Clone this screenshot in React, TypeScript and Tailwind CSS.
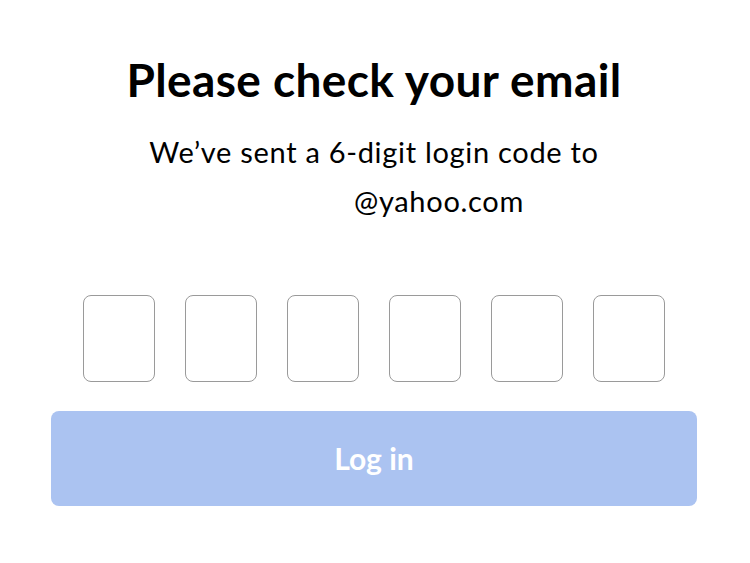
export default function App() {
  return (
    <div className="min-h-[563px] w-[750px] bg-white font-['Lato',sans-serif] text-black">
      <div className="ml-[51px] flex w-[646px] flex-col items-center pt-[52px]">
        <h1 className="text-[46px] font-bold leading-[56px] tracking-[0.4px]">Please check your email</h1>
        <p className="mt-[19px] text-center text-[29px] leading-[49px] tracking-[0.7px]">
          We’ve sent a 6-digit login code to
          <br />
          <span className="inline-block w-[130px]" />@yahoo.com
        </p>
        <div className="mt-[70px] flex gap-[30px]">
          {[0, 1, 2, 3, 4, 5].map((i) => (
            <input
              key={i}
              maxLength={1}
              className="h-[87px] w-[72px] rounded-[8px] border border-[#9a9a9a] text-center text-[32px] outline-none"
            />
          ))}
        </div>
        <button className="mt-[29px] h-[95px] w-full rounded-[8px] bg-[#abc3f1] text-[30px] font-bold text-white">
          Log in
        </button>
      </div>
    </div>
  );
}
